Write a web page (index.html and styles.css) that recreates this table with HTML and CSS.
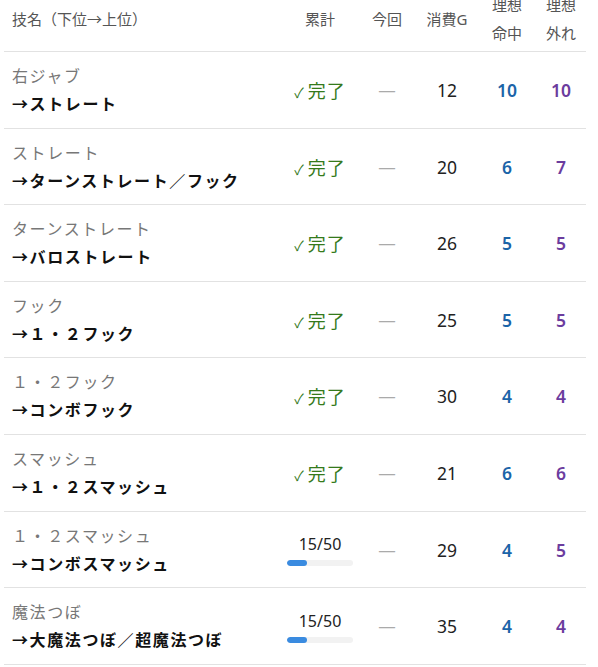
FILE: index.html
```html
<!DOCTYPE html>
<html lang="ja">
<head>
    <meta charset="UTF-8">
    <meta name="viewport" content="width=device-width, initial-scale=1.0">
    <title>技ツリー</title>
    <link rel="stylesheet" href="styles.css">
</head>
<body>
    <div class="wrapper">
        <table class="skills">
            <colgroup>
                <col class="col-name">
                <col class="col-total">
                <col class="col-now">
                <col class="col-cost">
                <col class="col-hit">
                <col class="col-miss">
            </colgroup>
            <thead>
                <tr>
                    <th class="name">技名（下位→上位）</th>
                    <th>累計</th>
                    <th>今回</th>
                    <th>消費G</th>
                    <th>理想<br>命中</th>
                    <th>理想<br>外れ</th>
                </tr>
            </thead>
            <tbody>
                <tr>
                    <td class="name"><div class="from">右ジャブ</div><div class="to">→ストレート</div></td>
                    <td><span class="done"><span class="check">✓</span>完了</span></td>
                    <td class="dash">—</td>
                    <td class="cost">12</td>
                    <td class="hit">10</td>
                    <td class="miss">10</td>
                </tr>
                <tr>
                    <td class="name"><div class="from">ストレート</div><div class="to">→ターンストレート／フック</div></td>
                    <td><span class="done"><span class="check">✓</span>完了</span></td>
                    <td class="dash">—</td>
                    <td class="cost">20</td>
                    <td class="hit">6</td>
                    <td class="miss">7</td>
                </tr>
                <tr>
                    <td class="name"><div class="from">ターンストレート</div><div class="to">→バロストレート</div></td>
                    <td><span class="done"><span class="check">✓</span>完了</span></td>
                    <td class="dash">—</td>
                    <td class="cost">26</td>
                    <td class="hit">5</td>
                    <td class="miss">5</td>
                </tr>
                <tr>
                    <td class="name"><div class="from">フック</div><div class="to">→１・２フック</div></td>
                    <td><span class="done"><span class="check">✓</span>完了</span></td>
                    <td class="dash">—</td>
                    <td class="cost">25</td>
                    <td class="hit">5</td>
                    <td class="miss">5</td>
                </tr>
                <tr>
                    <td class="name"><div class="from">１・２フック</div><div class="to">→コンボフック</div></td>
                    <td><span class="done"><span class="check">✓</span>完了</span></td>
                    <td class="dash">—</td>
                    <td class="cost">30</td>
                    <td class="hit">4</td>
                    <td class="miss">4</td>
                </tr>
                <tr>
                    <td class="name"><div class="from">スマッシュ</div><div class="to">→１・２スマッシュ</div></td>
                    <td><span class="done"><span class="check">✓</span>完了</span></td>
                    <td class="dash">—</td>
                    <td class="cost">21</td>
                    <td class="hit">6</td>
                    <td class="miss">6</td>
                </tr>
                <tr>
                    <td class="name"><div class="from">１・２スマッシュ</div><div class="to">→コンボスマッシュ</div></td>
                    <td>
                        <div class="count">15/50</div>
                        <div class="bar"><div class="fill" style="width: 30%;"></div></div>
                    </td>
                    <td class="dash">—</td>
                    <td class="cost">29</td>
                    <td class="hit">4</td>
                    <td class="miss">5</td>
                </tr>
                <tr>
                    <td class="name"><div class="from">魔法つぼ</div><div class="to">→大魔法つぼ／超魔法つぼ</div></td>
                    <td>
                        <div class="count">15/50</div>
                        <div class="bar"><div class="fill" style="width: 30%;"></div></div>
                    </td>
                    <td class="dash">—</td>
                    <td class="cost">35</td>
                    <td class="hit">4</td>
                    <td class="miss">4</td>
                </tr>
            </tbody>
        </table>
    </div>
</body>
</html>
```

FILE: styles.css
```css
* {
    margin: 0;
    padding: 0;
    box-sizing: border-box;
}

body {
    font-family: "Noto Sans", "Noto Sans CJK JP", sans-serif;
    background: #fff;
    color: #222;
    overflow: hidden;
}

.wrapper {
    padding: 0 12px 0 4px;
}

.skills {
    width: 582px;
    margin-top: -9px;
    border-collapse: collapse;
    table-layout: fixed;
}

.col-name { width: 278px; }
.col-total { width: 76px; }
.col-now { width: 58px; }
.col-cost { width: 62px; }
.col-hit { width: 58px; }
.col-miss { width: 50px; }

.skills th {
    font-size: 15px;
    font-weight: 400;
    color: #555;
    line-height: 28px;
    padding: 0 0 4px;
    text-align: center;
    vertical-align: middle;
    border-bottom: 1px solid #e2e2e2;
}

.skills th.name {
    text-align: left;
    padding-left: 8px;
}

.skills td {
    text-align: center;
    vertical-align: middle;
    padding: 10px 0 9.6px;
    border-bottom: 1px solid #e2e2e2;
    font-size: 17.5px;
}

.skills td.name {
    text-align: left;
    padding-left: 8px;
    font-size: 16px;
    line-height: 28px;
    letter-spacing: 1.6px;
    white-space: nowrap;
}

.from {
    color: #777;
}

.to {
    color: #111;
    font-weight: 700;
}

.done {
    color: #357a1c;
    font-size: 18px;
    letter-spacing: 1px;
}

.check {
    font-size: 14px;
    margin-right: 3px;
}

.dash {
    color: #aaa;
}

.cost {
    color: #222;
}

.hit {
    color: #1b64a8;
    font-weight: 600;
}

.miss {
    color: #6b3c9e;
    font-weight: 600;
}

.count {
    font-size: 16px;
    line-height: 22px;
    color: #222;
}

.bar {
    width: 66px;
    height: 6px;
    margin: 5px auto 0;
    background: #f2f2f2;
    border-radius: 3px;
    overflow: hidden;
}

.fill {
    height: 100%;
    background: #3a8be0;
    border-radius: 3px;
}
```
